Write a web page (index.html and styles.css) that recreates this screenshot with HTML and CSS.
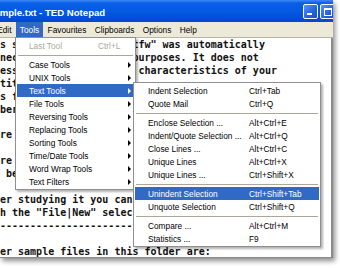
FILE: index.html
```html
<!DOCTYPE html>
<html lang="en">
<head>
    <meta charset="UTF-8">
    <meta name="viewport" content="width=device-width, initial-scale=1.0">
    <title>sample.txt - TED Notepad</title>
    <link rel="stylesheet" href="styles.css">
</head>
<body>
    <div class="window">
        <div class="titlebar">
            <span class="title">sample.txt - TED Notepad</span>
            <div class="caption-buttons">
                <span class="cap-btn cap-min"></span>
                <span class="cap-btn cap-max"></span>
            </div>
        </div>

        <div class="menubar">
            <span class="menu menu-edit">Edit</span>
            <span class="menu open">Tools</span>
            <span class="menu">Favourites</span>
            <span class="menu">Clipboards</span>
            <span class="menu">Options</span>
            <span class="menu">Help</span>
        </div>

<pre class="editor">s sample file "sample.tfw" was automatically
necessary for testing purposes. It does not
essentially mirror the characteristics of your
titled documents.
s files are kept
bered by name.

re is a list.

re it is
 be found.

er studying it you can
h the "File|New" selection.
------------------------------------------------

er sample files in this folder are:</pre>

        <div class="popup tools-popup">
            <div class="item disabled"><span class="label">Last Tool</span><span class="key">Ctrl+L</span></div>
            <div class="sep"></div>
            <div class="item"><span class="label">Case Tools</span><span class="arrow"></span></div>
            <div class="item"><span class="label">UNIX Tools</span><span class="arrow"></span></div>
            <div class="item active"><span class="label">Text Tools</span><span class="arrow"></span></div>
            <div class="item"><span class="label">File Tools</span><span class="arrow"></span></div>
            <div class="item"><span class="label">Reversing Tools</span><span class="arrow"></span></div>
            <div class="item"><span class="label">Replacing Tools</span><span class="arrow"></span></div>
            <div class="item"><span class="label">Sorting Tools</span><span class="arrow"></span></div>
            <div class="item"><span class="label">Time/Date Tools</span><span class="arrow"></span></div>
            <div class="item"><span class="label">Word Wrap Tools</span><span class="arrow"></span></div>
            <div class="item"><span class="label">Text Filters</span><span class="arrow"></span></div>
        </div>

        <div class="popup text-popup">
            <div class="item"><span class="label">Indent Selection</span><span class="key">Ctrl+Tab</span></div>
            <div class="item"><span class="label">Quote Mail</span><span class="key">Ctrl+Q</span></div>
            <div class="sep"></div>
            <div class="item"><span class="label">Enclose Selection ...</span><span class="key">Alt+Ctrl+E</span></div>
            <div class="item"><span class="label">Indent/Quote Selection ...</span><span class="key">Alt+Ctrl+Q</span></div>
            <div class="item"><span class="label">Close Lines ...</span><span class="key">Alt+Ctrl+C</span></div>
            <div class="item"><span class="label">Unique Lines</span><span class="key">Alt+Ctrl+X</span></div>
            <div class="item"><span class="label">Unique Lines ...</span><span class="key">Ctrl+Shift+X</span></div>
            <div class="sep"></div>
            <div class="item active"><span class="label">Unindent Selection</span><span class="key">Ctrl+Shift+Tab</span></div>
            <div class="item"><span class="label">Unquote Selection</span><span class="key">Ctrl+Shift+Q</span></div>
            <div class="sep"></div>
            <div class="item"><span class="label">Compare ...</span><span class="key">Alt+Ctrl+M</span></div>
            <div class="item"><span class="label">Statistics ...</span><span class="key">F9</span></div>
        </div>
    </div>
</body>
</html>
```

FILE: styles.css
```css
body {
    margin: 0;
    width: 340px;
    height: 268px;
    overflow: hidden;
    background: #fff;
}
.window {
    position: relative;
    width: 333px;
    height: 258px;
    overflow: hidden;
    background: #fff;
    box-shadow: 2px 3px 5px rgba(0, 0, 0, 0.45);
}

/* title bar */
.titlebar {
    display: flex;
    align-items: center;
    height: 22px;
    background: linear-gradient(#3d8af7 0, #0a5fe6 3px, #0558e2 55%, #0048d0 100%);
    color: #fff;
    font: bold 9.6px "Liberation Sans", Arial, sans-serif;
}
.title {
    flex: 1;
    margin-left: -11px;
    padding-top: 2px;
    white-space: nowrap;
}
.caption-buttons {
    display: flex;
    gap: 2px;
    margin-right: -2px;
}
.cap-btn {
    position: relative;
    width: 13px;
    height: 13px;
    border: 1px solid #fff;
    border-radius: 2px;
    background: linear-gradient(135deg, #5a94f5, #2461e0 60%, #1a50cc);
}
.cap-min::after {
    content: "";
    position: absolute;
    left: 3px;
    bottom: 3px;
    width: 5px;
    height: 2px;
    background: #fff;
}
.cap-max::after {
    content: "";
    position: absolute;
    left: 3px;
    top: 3px;
    width: 6px;
    height: 5px;
    border: 1px solid #fff;
    border-top-width: 2px;
}

/* menu bar */
.menubar {
    display: flex;
    height: 15px;
    background: #ece9d8;
    border-bottom: 1px solid #b8b5a6;
    font: 8.3px "Liberation Sans", Arial, sans-serif;
    color: #000;
}
.menu {
    display: flex;
    align-items: center;
    padding: 0 4.2px;
}
.menu-edit {
    margin-left: -7px;
}
.menu.open {
    background: #316ac5;
    color: #fff;
}

/* text area */
.editor {
    margin: 0;
    height: 218px;
    padding: 1px 0 0 0;
    border-right: 2px solid #8a8a8a;
    border-bottom: 2px solid #8a8a8a;
    font: bold 10px "DejaVu Sans Mono", "Liberation Mono", monospace;
    line-height: 12.9px;
    color: #111;
    overflow: hidden;
}

/* popup menus */
.popup {
    position: absolute;
    padding: 1px;
    background: #fff;
    border: 1px solid #8f8f8f;
    box-shadow: 2px 2px 2px rgba(0, 0, 0, 0.3);
    font: 8.3px "Liberation Sans", Arial, sans-serif;
    color: #000;
}
.tools-popup {
    left: 15px;
    top: 37px;
    width: 117px;
}
.text-popup {
    left: 133px;
    top: 82px;
    width: 184px;
}
.item {
    display: flex;
    align-items: center;
    height: 13px;
    padding-left: 12px;
    white-space: nowrap;
}
.tools-popup .label {
    width: 69px;
}
.text-popup .item {
    padding-left: 13px;
}
.text-popup .label {
    width: 101px;
}
.item.disabled {
    color: #aca899;
}
.item.active {
    background: #316ac5;
    color: #fff;
}
.arrow {
    margin-left: auto;
    margin-right: 3px;
    width: 0;
    height: 0;
    border-left: 3px solid #000;
    border-top: 3px solid transparent;
    border-bottom: 3px solid transparent;
}
.item.active .arrow {
    border-left-color: #fff;
}
.sep {
    height: 1px;
    margin: 3px 1px 2px;
    background: #aca899;
}
```
